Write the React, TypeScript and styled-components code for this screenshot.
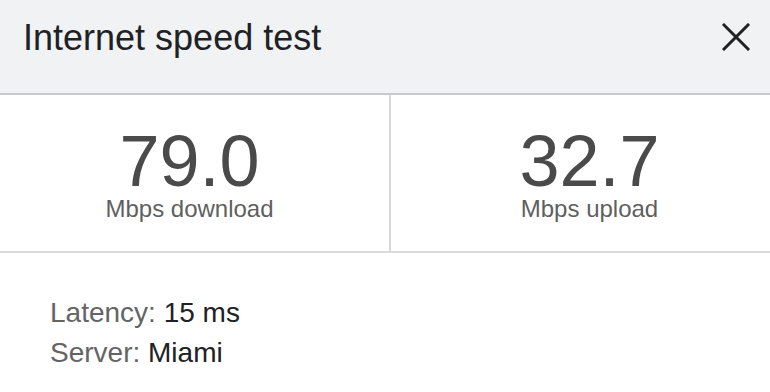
import React from "react";
import styled, { createGlobalStyle } from "styled-components";

const GlobalStyle = createGlobalStyle`
  html, body {
    margin: 0;
    padding: 0;
    background: #ffffff;
    font-family: "Liberation Sans", Arial, Helvetica, sans-serif;
  }
  * { box-sizing: border-box; }
`;

const Panel = styled.div`
  width: 770px;
  height: 392px;
  background: #ffffff;
  overflow: hidden;
`;

const Header = styled.header`
  height: 95px;
  display: flex;
  justify-content: space-between;
  align-items: flex-start;
  padding: 18px 20px 0 23px;
  background: #f1f2f4;
  border-bottom: 2px solid #c9c9c9;
`;

const Title = styled.h1`
  margin: 0;
  font-size: 36px;
  line-height: 40px;
  font-weight: 400;
  color: #202124;
`;

const CloseButton = styled.button`
  border: 0;
  padding: 0;
  margin-top: 5px;
  background: transparent;
  width: 28px;
  height: 28px;
  display: flex;
  cursor: pointer;
`;

const Stats = styled.section`
  display: grid;
  grid-template-columns: 389px 1fr;
  border-bottom: 2px solid #dadada;
`;

const Stat = styled.div<{ $padLeft: number; $padRight: number; $divider?: boolean }>`
  display: flex;
  flex-direction: column;
  align-items: center;
  padding: 34px ${(p) => p.$padRight}px 30px ${(p) => p.$padLeft}px;
  border-left: ${(p) => (p.$divider ? "2px solid #d8d8d8" : "0")};
`;

const Value = styled.div`
  font-size: 72px;
  line-height: 64px;
  color: #4a4a4a;
`;

const Unit = styled.div`
  margin-top: 4px;
  font-size: 24px;
  line-height: 24px;
  color: #5f5f5f;
`;

const Info = styled.section`
  padding: 40px 0 0 50px;
`;

const InfoRow = styled.div`
  font-size: 28px;
  line-height: 40px;
  color: #202124;
`;

const InfoLabel = styled.span`
  color: #646464;
`;

export default function App() {
  return (
    <>
      <GlobalStyle />
      <Panel>
        <Header>
          <Title>Internet speed test</Title>
          <CloseButton aria-label="Close">
            <svg width="28" height="28" viewBox="0 0 28 28">
              <path d="M2 2 L26 26 M26 2 L2 26" stroke="#202124" strokeWidth="3" strokeLinecap="square" fill="none" />
            </svg>
          </CloseButton>
        </Header>
        <Stats>
          <Stat $padLeft={0} $padRight={10}>
            <Value>79.0</Value>
            <Unit>Mbps download</Unit>
          </Stat>
          <Stat $padLeft={18} $padRight={0} $divider>
            <Value>32.7</Value>
            <Unit>Mbps upload</Unit>
          </Stat>
        </Stats>
        <Info>
          <InfoRow>
            <InfoLabel>Latency: </InfoLabel>15 ms
          </InfoRow>
          <InfoRow>
            <InfoLabel>Server: </InfoLabel>Miami
          </InfoRow>
        </Info>
      </Panel>
    </>
  );
}
